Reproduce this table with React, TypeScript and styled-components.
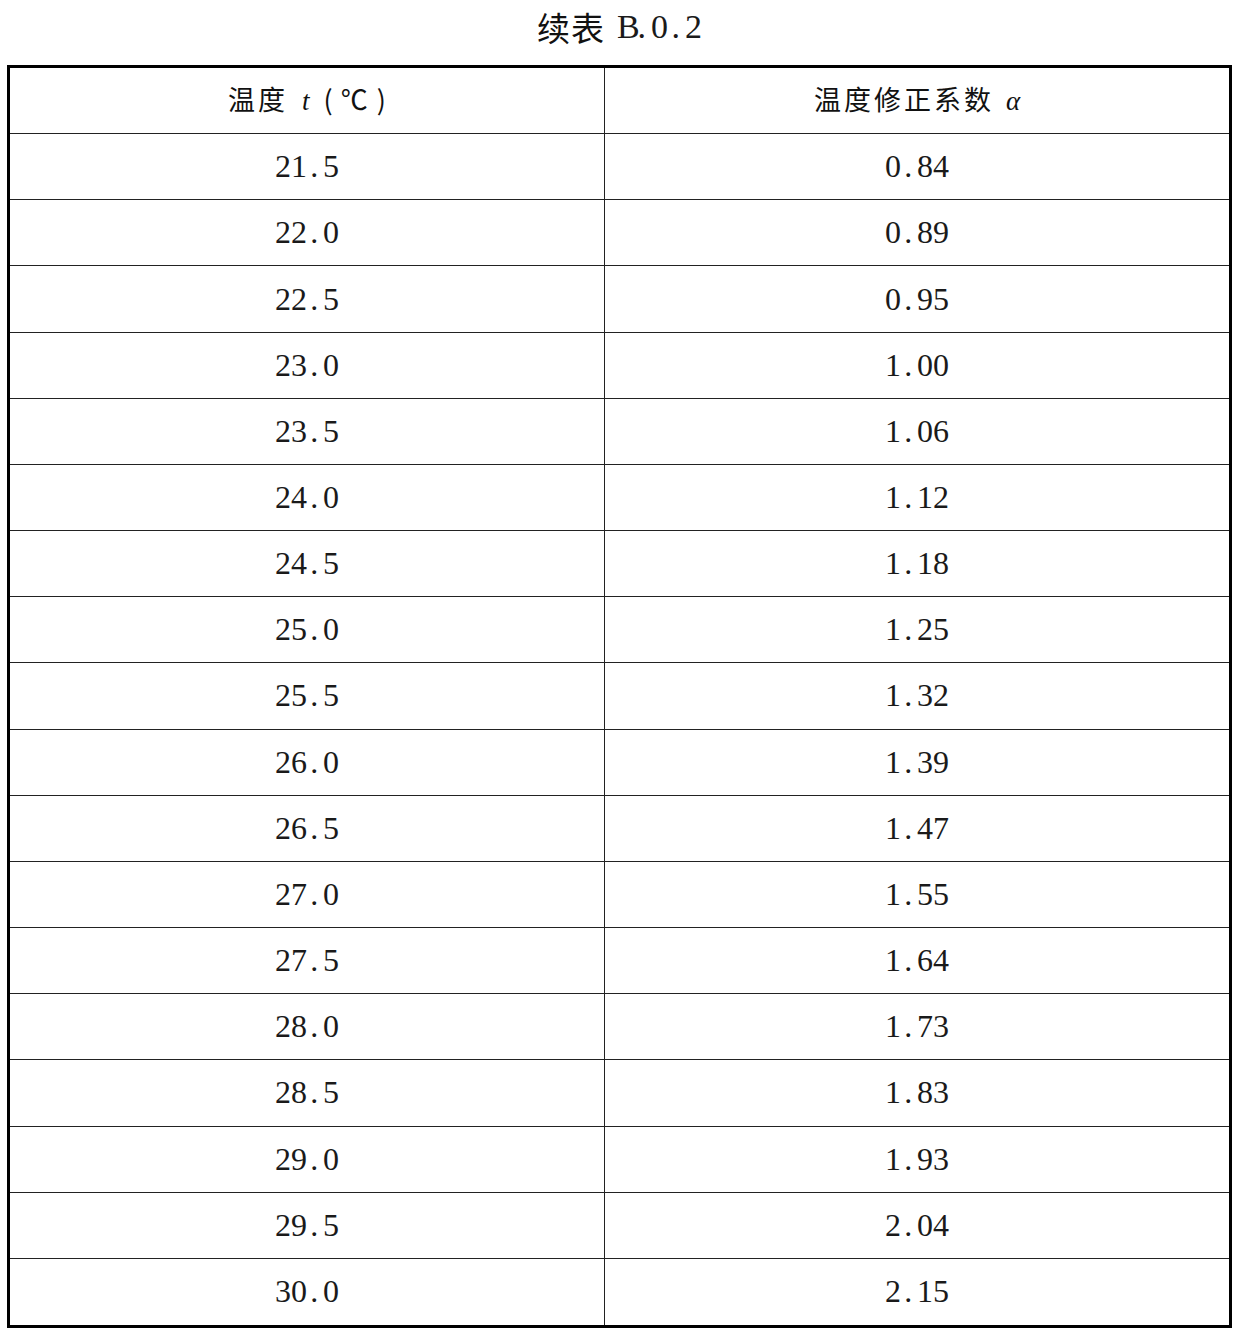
import styled, { createGlobalStyle } from 'styled-components';

const rows: [string, string][] = [
  ['21.5', '0.84'],
  ['22.0', '0.89'],
  ['22.5', '0.95'],
  ['23.0', '1.00'],
  ['23.5', '1.06'],
  ['24.0', '1.12'],
  ['24.5', '1.18'],
  ['25.0', '1.25'],
  ['25.5', '1.32'],
  ['26.0', '1.39'],
  ['26.5', '1.47'],
  ['27.0', '1.55'],
  ['27.5', '1.64'],
  ['28.0', '1.73'],
  ['28.5', '1.83'],
  ['29.0', '1.93'],
  ['29.5', '2.04'],
  ['30.0', '2.15'],
];

const GlobalStyle = createGlobalStyle`
  body {
    margin: 0;
    background: #fff;
    color: #111;
    font-family: 'Liberation Serif', 'Noto Sans CJK SC', serif;
  }
`;

const Page = styled.div`
  display: flex;
  flex-direction: column;
  width: 1239px;
  padding: 0 7px 0 7px;
  box-sizing: border-box;
`;

const Title = styled.div`
  display: flex;
  justify-content: center;
  align-items: center;
  gap: 12px;
  height: 54px;
  margin-bottom: 11px;
  font-size: 33px;
`;

const Han = styled.span<{ $gap?: number }>`
  font-family: 'Noto Sans CJK SC', sans-serif;
  font-weight: 400;
  letter-spacing: ${(p) => p.$gap ?? 0}px;
`;

// bracket / degree sign, spaced out like full-width characters
const Sym = styled.span<{ $ml?: number }>`
  font-family: 'Noto Sans CJK SC', sans-serif;
  margin-left: ${(p) => p.$ml ?? 0}px;
`;

const Mono = styled.span<{ $size: number }>`
  display: inline-flex;
  font-family: 'Liberation Serif', serif;
  font-size: ${(p) => p.$size}px;
  color: #1a1a1a;
`;

const Glyph = styled.span<{ $dot?: boolean }>`
  display: inline-block;
  width: 0.5em;
  box-sizing: border-box;
  text-align: ${(p) => (p.$dot ? 'left' : 'center')};
  padding-left: ${(p) => (p.$dot ? '0.1em' : '0')};
`;

const Table = styled.div`
  display: grid;
  grid-template-columns: 595px 1fr;
  grid-auto-rows: 66.16px;
  border: 3px solid #000;
`;

const Cell = styled.div<{ $left?: boolean; $last?: boolean }>`
  display: flex;
  align-items: center;
  justify-content: center;
  box-sizing: border-box;
  border-right: ${(p) => (p.$left ? '1px solid #222' : 'none')};
  border-bottom: ${(p) => (p.$last ? 'none' : '1px solid #222')};
`;

const HeadText = styled.span`
  display: inline-flex;
  align-items: baseline;
  font-size: 27px;
  margin-bottom: 4px;
`;

const Italic = styled.span<{ $ml?: number; $mr?: number }>`
  font-family: 'Liberation Serif', serif;
  font-style: italic;
  margin-left: ${(p) => p.$ml ?? 0}px;
  margin-right: ${(p) => p.$mr ?? 0}px;
`;

const Num = ({ value, size }: { value: string; size: number }) => (
  <Mono $size={size}>
    {value.split('').map((ch, i) => (
      <Glyph key={i} $dot={ch === '.'}>
        {ch}
      </Glyph>
    ))}
  </Mono>
);

export default function App() {
  return (
    <>
      <GlobalStyle />
      <Page>
        <Title>
          <Han $gap={1}>续表</Han>
          <Num value="B.0.2" size={34} />
        </Title>
        <Table>
          <Cell $left>
            <HeadText>
              <Han $gap={3}>温度</Han>
              <Italic $ml={14} $mr={14}>t</Italic>
              <Sym>(</Sym>
              <Sym $ml={8}>℃</Sym>
              <Sym $ml={9}>)</Sym>
            </HeadText>
          </Cell>
          <Cell>
            <HeadText>
              <Han $gap={3}>温度修正系数</Han>
              <Italic $ml={12}>α</Italic>
            </HeadText>
          </Cell>
          {rows.map(([t, a], i) => {
            const last = i === rows.length - 1;
            return [
              <Cell key={`t${i}`} $left $last={last}>
                <Num value={t} size={32} />
              </Cell>,
              <Cell key={`a${i}`} $last={last}>
                <Num value={a} size={32} />
              </Cell>,
            ];
          })}
        </Table>
      </Page>
    </>
  );
}
